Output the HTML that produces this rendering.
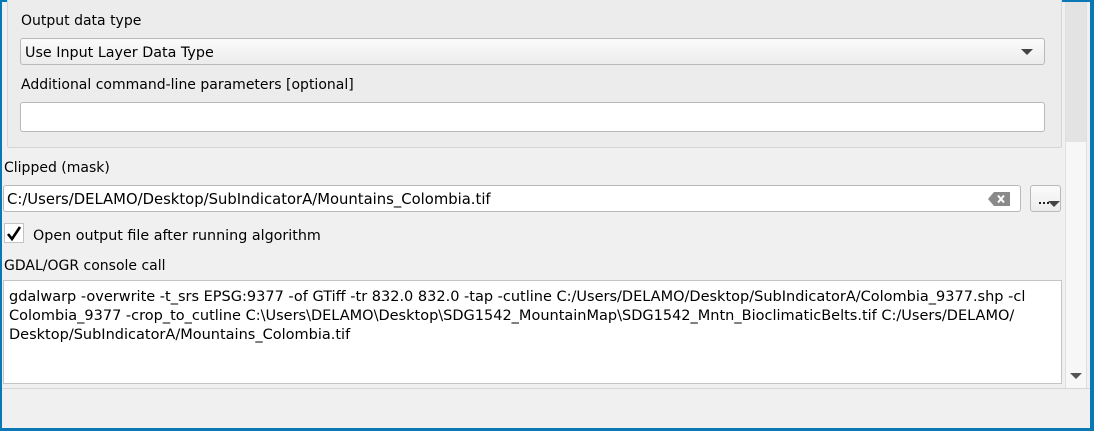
<!DOCTYPE html>
<html><head><style>
*{box-sizing:border-box;margin:0;padding:0}
body{width:1094px;height:431px;background:#f0f0f0;font-family:"DejaVu Sans","Liberation Sans",sans-serif;font-size:14px;color:#000;position:relative;overflow:hidden}
.a{position:absolute}
.lbl{position:absolute;white-space:nowrap;line-height:16px}
.inp{position:absolute;background:#fff;border:1px solid #b9b9b9;border-radius:3px}
</style></head><body>
<div class="a" style="left:0;top:0;width:1094px;height:431px;border:2px solid #0a78b4;border-right-width:4px;border-bottom-width:3px"></div>
<div class="a" style="left:7px;top:-2px;width:1055px;height:150px;border:1px solid #d6d6d6;border-radius:2px;background:#ececec"></div>
<div class="lbl" style="left:21px;top:13px">Output data type</div>
<div class="inp" style="left:20px;top:38px;width:1025px;height:27px;background:linear-gradient(#fbfbfb,#ececec)"><span class="lbl" style="left:4px;top:6px;font-size:14.3px">Use Input Layer Data Type</span>
<div class="a" style="right:11px;top:10px;width:0;height:0;border-left:6px solid transparent;border-right:6px solid transparent;border-top:6px solid #444"></div></div>
<div class="lbl" style="left:21px;top:77px">Additional command-line parameters [optional]</div>
<div class="inp" style="left:20px;top:102px;width:1025px;height:30px"></div>
<div class="lbl" style="left:4px;top:160px">Clipped (mask)</div>
<div class="inp" style="left:3px;top:185px;width:1018px;height:27px"><span class="lbl" style="left:3px;top:6px;font-size:14.8px">C:/Users/DELAMO/Desktop/SubIndicatorA/Mountains_Colombia.tif</span>
<svg class="a" style="right:10px;top:6px" width="22" height="14"><path d="M0 7 L6 0 H22 V14 H6 Z" fill="#8a8a8a"/><path d="M10 3.5 L16 10.5 M16 3.5 L10 10.5" stroke="#fff" stroke-width="2"/></svg></div>
<div class="inp" style="left:1030px;top:185px;width:31px;height:27px;background:linear-gradient(#fbfbfb,#ececec)">
<span class="a" style="left:8px;top:16px;width:2px;height:2px;background:#222"></span><span class="a" style="left:12px;top:16px;width:2px;height:2px;background:#222"></span><span class="a" style="left:16px;top:16px;width:2px;height:2px;background:#222"></span>
<div class="a" style="left:17px;top:15px;border-left:6px solid transparent;border-right:6px solid transparent;border-top:6px solid #444"></div></div>
<div class="a" style="left:4px;top:223px;width:20px;height:20px;background:#fff;border:1px solid #c4c4c4"></div>
<svg class="a" style="left:6px;top:226px" width="16" height="15"><path d="M2 8 L6 13 L14 1" stroke="#000" stroke-width="2.6" fill="none"/></svg>
<div class="lbl" style="left:33px;top:228px;font-size:14.3px">Open output file after running algorithm</div>
<div class="lbl" style="left:4px;top:258px">GDAL/OGR console call</div>
<div class="a" style="left:3px;top:280px;width:1059px;height:104px;background:#fff;border:1px solid #c4c4c4"></div>
<div class="a" style="left:9px;top:288px;line-height:19px;font-size:14px;white-space:nowrap;transform:scaleX(1.036);transform-origin:0 0">gdalwarp -overwrite -t_srs EPSG:9377 -of GTiff -tr 832.0 832.0 -tap -cutline C:/Users/DELAMO/Desktop/SubIndicatorA/Colombia_9377.shp -cl<br>Colombia_9377 -crop_to_cutline C:\Users\DELAMO\Desktop\SDG1542_MountainMap\SDG1542_Mntn_BioclimaticBelts.tif C:/Users/DELAMO/<br>Desktop/SubIndicatorA/Mountains_Colombia.tif</div>
<div class="a" style="left:1065px;top:2px;width:22px;height:386px;background:#f7f7f7;border-left:1px solid #e0e0e0;border-right:1px solid #e0e0e0"></div>
<div class="a" style="left:1066px;top:2px;width:20px;height:140px;background:#e3e3e3"></div>
<div class="a" style="left:1070px;top:373px;border-left:6px solid transparent;border-right:6px solid transparent;border-top:6px solid #555"></div>
<div class="a" style="left:2px;top:388px;width:1088px;height:1px;background:#d6d6d6"></div>
</body></html>
